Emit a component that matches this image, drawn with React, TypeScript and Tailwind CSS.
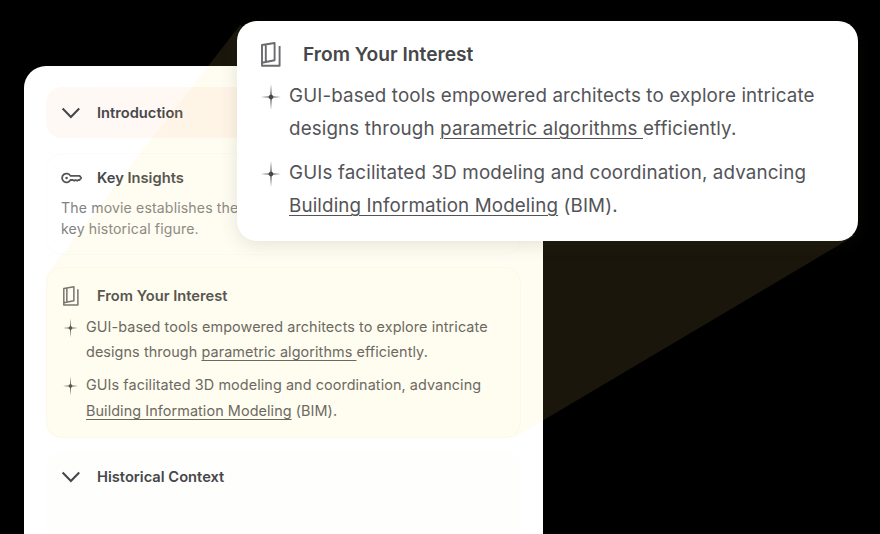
import type { ReactNode } from "react";

function Chevron() {
  return (
    <svg className="h-5 w-5 shrink-0" viewBox="0 0 20 20" fill="none" stroke="#46474a" strokeWidth="2.1">
      <path d="M1.6 5.6 L9.9 13.9 L18.2 5.6" />
    </svg>
  );
}

function KeyIcon() {
  return (
    <svg className="h-5 w-[22px] shrink-0" viewBox="0 0 22 20" fill="none" stroke="#55565a" strokeWidth="1.8" strokeLinejoin="round">
      <path d="M9.4 7.9 A4.4 4.4 0 1 0 9.4 12 H11.9 L13.3 12.8 L14.7 11.9 L16.2 12.8 L17.6 12 H18.6 L20.3 10 L18.6 7.9 Z" />
      <circle cx="5.6" cy="10" r="1.3" fill="#55565a" stroke="none" />
    </svg>
  );
}

function BookIcon({ className }: { className: string }) {
  return (
    <svg className={className} viewBox="0 0 20 25" fill="none" stroke="#6a6b6f" strokeWidth="1.9" strokeLinejoin="round">
      <path d="M1 3 L13.6 1 V18.3 L1 20.8 Z M4.8 2.6 V20" />
      <path d="M1 20.8 V23.7 H18.6 V4" />
    </svg>
  );
}

function Spark({ className }: { className: string }) {
  return (
    <svg className={className} viewBox="0 0 20 26" fill="#46474a">
      <path d="M10 0 L10.6 10.4 Q11 12.1 12.6 12.4 L20 13 L12.6 13.6 Q11 13.9 10.6 15.6 L10 26 L9.4 15.6 Q9 13.9 7.4 13.6 L0 13 L7.4 12.4 Q9 12.1 9.4 10.4 Z" />
      <circle cx="10" cy="13" r="2.2" />
    </svg>
  );
}

function Row({ icon, children }: { icon: ReactNode; children: ReactNode }) {
  return (
    <div className="flex items-center">
      <div className="flex w-9 shrink-0">{icon}</div>
      <h3 className="text-[14.7px] leading-5 font-semibold text-[#46474a]">{children}</h3>
    </div>
  );
}

function Points({ large = false }: { large?: boolean }) {
  const spark = large ? "mt-[5px] h-[26px] w-5 shrink-0" : "mt-[4px] h-5 w-[15px] shrink-0";
  return (
    <ul
      className={
        large
          ? "flex flex-col gap-[11px] text-[18.8px] leading-[33px] tracking-[0.13px] whitespace-nowrap text-[#535457]"
          : "flex flex-col gap-[8px] text-[14.4px] leading-[25.2px] tracking-[0.08px] whitespace-nowrap text-[#5b5c5e]"
      }
    >
      <li className="flex gap-2">
        <Spark className={spark} />
        <p>
          GUI-based tools empowered architects to explore intricate
          <br />
          designs through <span className="underline decoration-1 underline-offset-[3px]">parametric algorithms </span>efficiently.
        </p>
      </li>
      <li className="flex gap-2">
        <Spark className={spark} />
        <p>
          GUIs facilitated 3D modeling and coordination, advancing
          <br />
          <span className="underline decoration-1 underline-offset-[3px]">Building Information Modeling</span> (BIM).
        </p>
      </li>
    </ul>
  );
}

const beam = "M46 275 L240 25 L855 235.5 L521 433.5 Q516 438 508 438 H62 Q46 438 46 420 Z";

export default function App() {
  return (
    <main className="relative h-[534px] w-[880px] overflow-hidden bg-black pt-[66px] pl-6 font-['Inter',sans-serif] font-normal">
      <svg className="absolute inset-0" width="880" height="534" viewBox="0 0 880 534">
        <path d={beam} fill="#1a160b" />
      </svg>

      <section className="relative flex h-[500px] w-[519px] flex-col rounded-t-[22px] bg-white px-[22px] pt-[21px]">
        <div className="flex h-[51px] items-center rounded-[16px] bg-linear-to-r from-[#fff9f5] to-[#fff5ef] pl-[15px]">
          <Row icon={<Chevron />}>Introduction</Row>
        </div>
        <div className="mt-[15px] h-[102px] rounded-[16px] border border-[#fcfcfc] pt-[14px] pl-[14px]">
          <Row icon={<KeyIcon />}>Key Insights</Row>
          <p className="mt-[9px] text-[14.1px] leading-[21px] tracking-[0.14px] whitespace-nowrap text-[#808184]">
            The movie establishes the
            <br />
            key historical figure.
          </p>
        </div>
        <div className="mt-[12px] h-[171px] rounded-[16px] border border-[#fcfcf8] bg-[#fffffd] pt-[18px] pl-4">
          <div className="-ml-0.5">
            <Row icon={<BookIcon className="h-5 w-4 translate-x-0.5" />}>From Your Interest</Row>
          </div>
          <div className="mt-[8px]">
            <Points />
          </div>
        </div>
        <div className="mt-[14px] h-[100px] rounded-t-[16px] bg-[#fefefd] pt-[15px] pl-[15px]">
          <Row icon={<Chevron />}>Historical Context</Row>
        </div>
      </section>

      <svg className="absolute inset-0" width="880" height="534" viewBox="0 0 880 534">
        <clipPath id="card">
          <rect x="24" y="66" width="519" height="500" rx="22" />
        </clipPath>
        <path d={beam} fill="#ffe07c" fillOpacity="0.1" clipPath="url(#card)" />
      </svg>

      <section className="absolute top-[21px] left-[237px] h-[220px] w-[621px] rounded-[20px] bg-white pt-[20px] pl-6 shadow-[0_4px_18px_rgba(60,60,40,0.13)]">
        <div className="flex h-[26px] items-center">
          <div className="flex w-[42px]">
            <BookIcon className="h-[25px] w-5" />
          </div>
          <h2 className="text-[19.2px] leading-6 font-semibold text-[#46474a]">From Your Interest</h2>
        </div>
        <div className="mt-[12px]">
          <Points large />
        </div>
      </section>
    </main>
  );
}
